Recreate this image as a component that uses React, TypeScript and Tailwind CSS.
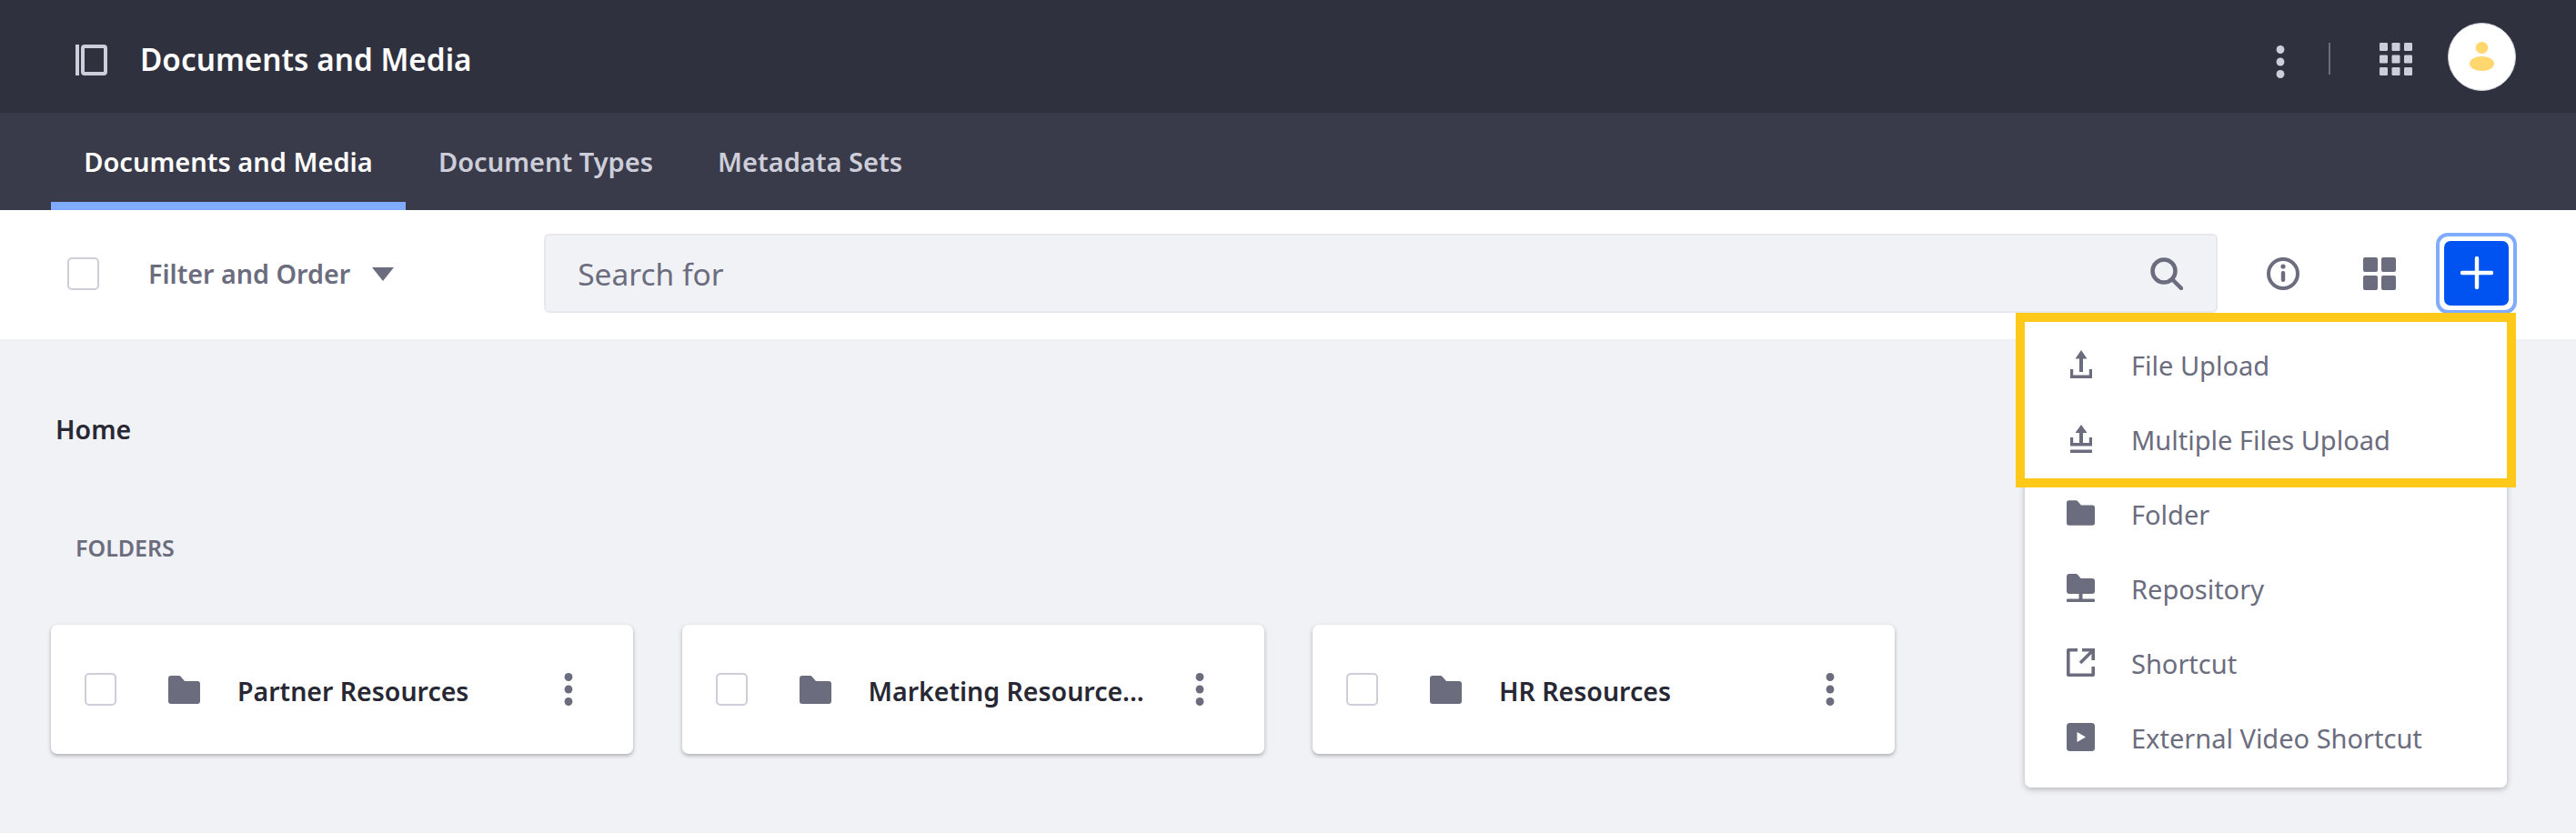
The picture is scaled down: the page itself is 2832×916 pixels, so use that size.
const C = "#6b6c7e";

function Kebab({ color = C, className = "" }: { color?: string; className?: string }) {
  return (
    <svg viewBox="0 0 10 36" className={className} fill={color}>
      <ellipse cx="5" cy="4.5" rx="4.4" ry="4.5" />
      <ellipse cx="5" cy="18" rx="4.4" ry="4.5" />
      <ellipse cx="5" cy="31.5" rx="4.4" ry="4.5" />
    </svg>
  );
}

function FolderIcon({ className = "" }: { className?: string }) {
  return (
    <svg viewBox="0 0 35 31" className={className} fill={C}>
      <path d="M0 3a3 3 0 0 1 3-3h8.5a3 3 0 0 1 2.4 1.2L18 6h14a3 3 0 0 1 3 3v19a3 3 0 0 1-3 3H3a3 3 0 0 1-3-3z" />
    </svg>
  );
}

function RepoIcon({ className = "" }: { className?: string }) {
  return (
    <svg viewBox="0 0 31 31" className={className} fill={C}>
      <path d="M0 3a3 3 0 0 1 3-3h7a3 3 0 0 1 2.4 1.2L15.5 5H28a3 3 0 0 1 3 3v11a3 3 0 0 1-3 3H3a3 3 0 0 1-3-3z" />
      <rect x="13.5" y="21" width="4" height="7" />
      <rect x="0" y="27.5" width="31" height="3.5" rx="1" />
    </svg>
  );
}

function UploadIcon({ multi = false }: { multi?: boolean }) {
  return (
    <svg viewBox="0 0 24 31" className="h-[31px] w-[24px]" fill={C}>
      {multi ? (
        <>
          <path d="M12 0l6.5 9h-4.500v11h-4V9H5.500z" />
          <path d="M0 14h3.200v6h17.600v-6H24v9.500H0z" />
          <rect x="0" y="27.5" width="24" height="3.5" rx="0.5" />
        </>
      ) : (
        <>
          <path d="M12 0l6.500 9.500h-4.500V24h-4V9.500H5.500z" />
          <path d="M0 21h3.200v6.500h17.600V21H24v10H0z" />
        </>
      )}
    </svg>
  );
}

function ShortcutIcon() {
  return (
    <svg viewBox="0 0 31 31" className="h-[31px] w-[31px]" fill="none" stroke={C} strokeWidth="3.6">
      <path d="M12 1.8H1.800v27.400h27.400V20" strokeLinejoin="round" />
      <path d="M17 1.800h12.200V13" />
      <path d="M28 3L15 16" />
    </svg>
  );
}

function VideoIcon() {
  return (
    <svg viewBox="0 0 31 31" className="h-[31px] w-[31px]">
      <rect width="31" height="31" rx="3.5" fill={C} />
      <path d="M11.500 10l9.500 5.500-9.500 5.500z" fill="#fff" />
    </svg>
  );
}

function Checkbox() {
  return <div className="h-[36px] w-[35px] shrink-0 rounded-[5px] border-2 border-[#cdced9] bg-white" />;
}

function Card({ title }: { title: string }) {
  return (
    <div className="flex h-[142px] w-[640px] items-center rounded-[7px] bg-white pl-[37px] pr-[66px] shadow-[0_2px_4px_rgba(39,40,51,0.35)]">
      <Checkbox />
      <FolderIcon className="ml-[57px] h-[31px] w-[35px] shrink-0" />
      <span className="ml-[41px] mt-[3px] flex-1 text-[28.5px] font-semibold leading-[40px] text-[#272833]">{title}</span>
      <Kebab className="h-[36px] w-[10px] shrink-0" />
    </div>
  );
}

const items: [string, React.ReactNode][] = [
  ["File Upload", <UploadIcon />],
  ["Multiple Files Upload", <UploadIcon multi />],
  ["Folder", <FolderIcon className="h-[28px] w-[31px]" />],
  ["Repository", <RepoIcon className="h-[31px] w-[31px]" />],
  ["Shortcut", <ShortcutIcon />],
  ["External Video Shortcut", <VideoIcon />],
];

export default function App() {
  return (
    <div className="relative h-[916px] w-[2832px] overflow-hidden bg-[#f1f2f5] font-['Noto_Sans',sans-serif]">
      <header className="flex h-[124px] items-center bg-[#30313f] pl-[83px] pr-[66px]">
        <svg viewBox="0 0 35 34" className="mt-[8px] h-[34px] w-[35px] shrink-0" fill="none" stroke="#cdced9">
          <path d="M2 0v34" strokeWidth="4" />
          <rect x="8" y="2" width="25" height="30" rx="2" strokeWidth="4" />
        </svg>
        <span className="ml-[36px] mt-[6px] text-[33.3px] font-semibold leading-[44px] text-white">Documents and Media</span>
        <div className="ml-auto flex items-center">
          <Kebab color="#cdced9" className="mt-[12px] h-[36px] w-[10px]" />
          <div className="ml-[48px] mt-[5px] h-[35px] w-[2px] bg-[#6b6c7e]" />
          <svg viewBox="0 0 36 36" className="ml-[54px] mt-[6px] h-[36px] w-[36px]" fill="#cdced9">
            {[0, 13.5, 27].map((y) =>
              [0, 13.5, 27].map((x) => <rect key={`${x}-${y}`} x={x} y={y} width="9" height="9" rx="1.2" />)
            )}
          </svg>
          <div className="ml-[39px] flex h-[75px] w-[75px] items-center justify-center rounded-full border border-[#cdced9] bg-white">
            <svg viewBox="0 0 27 32" className="h-[32px] w-[27px]" fill="#ffd76e">
              <ellipse cx="13.5" cy="6.5" rx="6.8" ry="6.5" />
              <ellipse cx="13.5" cy="24" rx="13.5" ry="8" />
            </svg>
          </div>
        </div>
      </header>

      <nav className="flex h-[107px] bg-[#393a4a] pl-[56px]">
        <div className="flex h-full w-[390px] items-center justify-center border-b-[9px] border-[#80acff] pt-[9px] text-[29px] font-semibold leading-[40px] text-white">
          Documents and Media
        </div>
        <div className="ml-[36px] flex h-full items-center text-[29px] font-semibold leading-[40px] text-[#cdced9]">Document Types</div>
        <div className="ml-[71px] flex h-full items-center text-[29px] font-semibold leading-[40px] text-[#cdced9]">Metadata Sets</div>
      </nav>

      <div className="flex h-[142px] items-center bg-white pb-[2px] pl-[74px] pr-[65px]">
        <Checkbox />
        <span className="ml-[54px] text-[28.7px] font-semibold leading-[40px] text-[#6b6c7e]">Filter and Order</span>
        <svg viewBox="0 0 24 15" className="ml-[24px] h-[15px] w-[24px]" fill={C}>
          <path d="M0 0h24L12 15z" />
        </svg>
        <div className="ml-[165px] -mt-[1px] flex h-[87px] flex-1 items-center rounded-[6px] border-2 border-[#e7e7ed] bg-[#f1f2f5] pl-[35px] pr-[36px]">
          <span className="text-[33.5px] leading-[44px] text-[#6b6c7e]">Search for</span>
          <svg viewBox="0 0 36 36" className="ml-auto h-[36px] w-[36px]" fill="none" stroke={C} strokeWidth="4.5">
            <circle cx="15" cy="15" r="12.5" />
            <path d="M24 24l10 10" strokeLinecap="round" />
          </svg>
        </div>
        <svg viewBox="0 0 36 36" className="ml-[54px] h-[36px] w-[36px]" fill="none">
          <ellipse cx="18" cy="18" rx="16" ry="16" stroke={C} strokeWidth="4" />
          <circle cx="18" cy="10" r="2.6" fill={C} />
          <rect x="15.8" y="15" width="4.4" height="12" rx="2" fill={C} />
        </svg>
        <svg viewBox="0 0 36 36" className="ml-[70px] h-[36px] w-[36px]" fill={C}>
          <rect x="0" y="0" width="16" height="16" rx="2" />
          <rect x="20" y="0" width="16" height="16" rx="2" />
          <rect x="0" y="20" width="16" height="16" rx="2" />
          <rect x="20" y="20" width="16" height="16" rx="2" />
        </svg>
        <div className="ml-[44px] -mt-[2px] rounded-[13px] border-[4px] border-[#80acff] bg-white p-[5px]">
          <div className="flex h-[71px] w-[71px] items-center justify-center rounded-[7px] bg-[#0053f0]">
            <svg viewBox="0 0 36 36" className="h-[36px] w-[36px]" stroke="#fff" strokeWidth="4.4" strokeLinecap="round">
              <path d="M18 2v32M2 18h32" />
            </svg>
          </div>
        </div>
      </div>

      <main className="pl-[61px]">
        <div className="pt-[79px] text-[28.5px] font-semibold leading-[40px] text-[#272833]">Home</div>
        <div className="ml-[22px] mt-[94px] text-[25px] font-semibold leading-[32px] text-[#6b6c7e]">FOLDERS</div>
        <div className="-ml-[5px] mt-[69px] flex gap-[53.500px]">
          <Card title="Partner Resources" />
          <Card title="Marketing Resource..." />
          <Card title="HR Resources" />
        </div>
      </main>

      <div className="absolute left-[2226px] top-[354px] w-[530px] rounded-b-[7px] bg-white pb-[13px] pt-[7px] shadow-[0_2px_6px_rgba(39,40,51,0.3)]">
        {items.map(([label, icon]) => (
          <div key={label} className="flex h-[82px] items-center">
            <div className="mb-[4px] flex w-[117px] justify-center pl-[6px]">{icon}</div>
            <span className="text-[29px] leading-[40px] text-[#6b6c7e]">{label}</span>
          </div>
        ))}
      </div>
      <div className="pointer-events-none absolute left-[2216px] top-[344px] h-[192px] w-[550px] border-[10px] border-[#ffc919]" />
    </div>
  );
}
